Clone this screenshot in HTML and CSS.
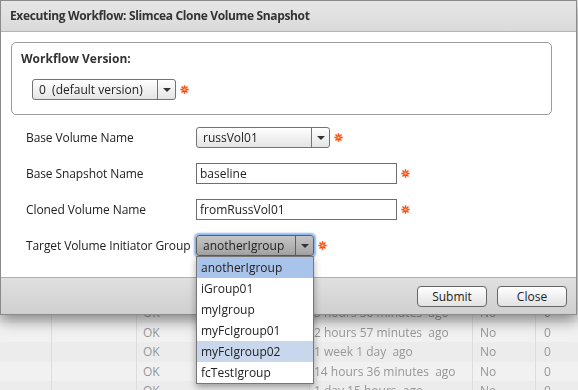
FILE: index.html
```html
<!DOCTYPE html>
<html>
<head>
    <title>Executing Workflow</title>
    <link rel="stylesheet" href="styles.css">
</head>
<body>
    <!-- page behind the dialog -->
    <div class="page">
        <table class="grid">
            <tr><td></td><td></td><td>OK</td><td>3 hours 36 minutes&nbsp; ago</td><td>No</td><td>0</td></tr>
            <tr><td></td><td></td><td>OK</td><td>2 hours 57 minutes&nbsp; ago</td><td>No</td><td>0</td></tr>
            <tr><td></td><td></td><td>OK</td><td>1 week 1 day&nbsp; ago</td><td>No</td><td>0</td></tr>
            <tr><td></td><td></td><td>OK</td><td>14 hours 36 minutes&nbsp; ago</td><td>No</td><td>0</td></tr>
            <tr><td></td><td></td><td>OK</td><td>1 day 15 hours&nbsp; ago</td><td>No</td><td>0</td></tr>
        </table>
    </div>

    <div class="dialog">
        <div class="dialog-title">Executing Workflow: Slimcea Clone Volume Snapshot</div>
        <div class="dialog-body">
            <div class="version-box">
                <div class="version-label">Workflow Version:</div>
                <div class="field-line">
                    <div class="select select-version">
                        <span class="select-text">0&nbsp; (default version)</span>
                        <span class="select-arrow"></span>
                    </div>
                    <span class="req"><svg width="9" height="9" viewBox="0 0 9 9"><path d="M4.5 0.3v8.4M0.3 4.5h8.4M1.5 1.5l6 6M7.5 1.5l-6 6" stroke="#ff5010" stroke-width="1.5"/><circle cx="4.5" cy="4.5" r="1.1" fill="#ffd0b8"/></svg></span>
                </div>
            </div>

            <div class="form">
                <label>Base Volume Name</label>
                <div class="field-line">
                    <div class="select select-base">
                        <span class="select-text">russVol01</span>
                        <span class="select-arrow"></span>
                    </div>
                    <span class="req"><svg width="9" height="9" viewBox="0 0 9 9"><path d="M4.5 0.3v8.4M0.3 4.5h8.4M1.5 1.5l6 6M7.5 1.5l-6 6" stroke="#ff5010" stroke-width="1.5"/><circle cx="4.5" cy="4.5" r="1.1" fill="#ffd0b8"/></svg></span>
                </div>

                <label>Base Snapshot Name</label>
                <div class="field-line">
                    <input class="text-input" type="text" value="baseline">
                    <span class="req"><svg width="9" height="9" viewBox="0 0 9 9"><path d="M4.5 0.3v8.4M0.3 4.5h8.4M1.5 1.5l6 6M7.5 1.5l-6 6" stroke="#ff5010" stroke-width="1.5"/><circle cx="4.5" cy="4.5" r="1.1" fill="#ffd0b8"/></svg></span>
                </div>

                <label>Cloned Volume Name</label>
                <div class="field-line">
                    <input class="text-input" type="text" value="fromRussVol01">
                    <span class="req"><svg width="9" height="9" viewBox="0 0 9 9"><path d="M4.5 0.3v8.4M0.3 4.5h8.4M1.5 1.5l6 6M7.5 1.5l-6 6" stroke="#ff5010" stroke-width="1.5"/><circle cx="4.5" cy="4.5" r="1.1" fill="#ffd0b8"/></svg></span>
                </div>

                <label>Target Volume Initiator Group</label>
                <div class="field-line">
                    <div class="select select-target open">
                        <span class="select-text">anotherIgroup</span>
                        <span class="select-arrow"></span>
                    </div>
                    <span class="req"><svg width="9" height="9" viewBox="0 0 9 9"><path d="M4.5 0.3v8.4M0.3 4.5h8.4M1.5 1.5l6 6M7.5 1.5l-6 6" stroke="#ff5010" stroke-width="1.5"/><circle cx="4.5" cy="4.5" r="1.1" fill="#ffd0b8"/></svg></span>
                </div>
            </div>
        </div>
        <div class="dialog-footer">
            <button class="btn">Submit</button>
            <button class="btn">Close</button>
        </div>
    </div>

    <!-- open select list -->
    <ul class="dropdown">
        <li class="selected">anotherIgroup</li>
        <li>iGroup01</li>
        <li>myIgroup</li>
        <li>myFcIgroup01</li>
        <li class="hover">myFcIgroup02</li>
        <li>fcTestIgroup</li>
    </ul>
</body>
</html>
```

FILE: styles.css
```css
body {
    margin: 0;
    font-family: "Open Sans", "DejaVu Sans", sans-serif;
    font-size: 12px;
    color: #222;
    background-color: #efefef;
    overflow: hidden;
}
.page {
    padding-top: 303px;
}
.grid {
    width: 578px;
    border-collapse: collapse;
    table-layout: fixed;
    color: #979797;
    filter: blur(0.6px);
}
.grid td {
    height: 19.5px;
    padding: 0 0 0 6px;
    border-left: 1px solid #dcdcdc;
    white-space: nowrap;
    overflow: hidden;
}
.grid tr:nth-child(odd) td { background-color: #ececec; }
.grid tr:nth-child(even) td { background-color: #f1f1f1; }
.grid td:nth-child(1) { width: 45px; border-left: none; }
.grid td:nth-child(2) { width: 78px; }
.grid td:nth-child(3) { width: 166px; }
.grid td:nth-child(4) { width: 158px; padding-left: 4px; }
.grid td:nth-child(5) { width: 55px; padding-left: 7px; }
.grid td:nth-child(6) { padding-left: 8px; }

.dialog {
    position: absolute;
    top: 0;
    left: 0;
    width: 577px;
    height: 315px;
    box-sizing: border-box;
    border: 1px solid #8a8a8a;
    background-color: #fff;
    display: flex;
    flex-direction: column;
    box-shadow: 0 5px 14px rgba(0,0,0,0.45);
}
.dialog-title {
    height: 30px;
    line-height: 30px;
    padding-left: 9px;
    font-weight: bold;
    letter-spacing: -0.35px;
    color: #333;
    background: linear-gradient(#e6e6e6, #dadada);
    border-bottom: 1px solid #b4b4b4;
}
.dialog-body {
    flex: 1;
    padding: 10px 10px 0 10px;
}
.version-box {
    width: 541px;
    height: 73px;
    box-sizing: border-box;
    border: 1px solid #9c9c9c;
    border-radius: 5px;
    padding: 8px 0 0 9px;
}
.version-label {
    font-weight: bold;
    color: #333;
    line-height: 16px;
    margin-bottom: 12px;
}
.version-box .field-line {
    padding-left: 11px;
}
.field-line {
    display: flex;
    align-items: center;
}
.req {
    display: flex;
    margin-left: 4px;
}
.form {
    display: grid;
    grid-template-columns: 170px auto;
    row-gap: 15px;
    align-items: center;
    margin-top: 12px;
    padding-left: 15px;
}
.form label {
    color: #222;
    letter-spacing: -0.1px;
}

.select {
    display: flex;
    height: 21px;
    box-sizing: border-box;
    border: 1px solid #737373;
    border-radius: 3px;
    background: linear-gradient(#ffffff, #e4e4e4);
    color: #222;
}
.select-text {
    flex: 1;
    line-height: 19px;
    padding-left: 6px;
    white-space: nowrap;
}
.select-arrow {
    width: 17px;
    border-left: 1px solid #737373;
    display: flex;
    align-items: center;
    justify-content: center;
}
.select-arrow::after {
    content: "";
    border-left: 4px solid transparent;
    border-right: 4px solid transparent;
    border-top: 4px solid #333;
}
.select-version { width: 144px; }
.select-base { width: 134px; }
.select-target { width: 118px; }
.select.open {
    background: linear-gradient(#c4c4c4, #a4a4a4);
    border-color: #5f5f5f;
    box-shadow: 0 0 2px 2px #8db3ea;
    color: #222;
}
.select.open .select-arrow { border-left-color: #5f5f5f; }

.text-input {
    width: 201px;
    height: 21px;
    box-sizing: border-box;
    margin: 0;
    border: 1px solid #6e6e6e;
    padding: 0 3px;
    font-family: inherit;
    font-size: 12px;
    color: #222;
    background-color: #fff;
}

.dialog-footer {
    height: 37px;
    border-top: 1px solid #b0b0b0;
    background: linear-gradient(#e0e0e0, #cfcfcf);
    display: flex;
    justify-content: flex-end;
    align-items: flex-start;
    gap: 10px;
    padding: 8px 9px 0 0;
    box-sizing: border-box;
}
.btn {
    width: 70px;
    height: 21px;
    padding: 0;
    border: 1px solid #666;
    border-radius: 4px;
    background: linear-gradient(#ffffff, #e2e2e2);
    font-family: inherit;
    font-size: 12px;
    color: #222;
}

.dropdown {
    position: absolute;
    top: 256px;
    left: 196px;
    width: 118px;
    box-sizing: border-box;
    margin: 0;
    padding: 0;
    list-style: none;
    background-color: #fff;
    border: 1px solid #777;
    box-shadow: 0 3px 7px rgba(0,0,0,0.35);
}
.dropdown li {
    height: 21px;
    line-height: 21px;
    padding-left: 4px;
    color: #222;
}
.dropdown li.selected { background-color: #a9c4ea; }
.dropdown li.hover { background-color: #c9d7ed; }
```
